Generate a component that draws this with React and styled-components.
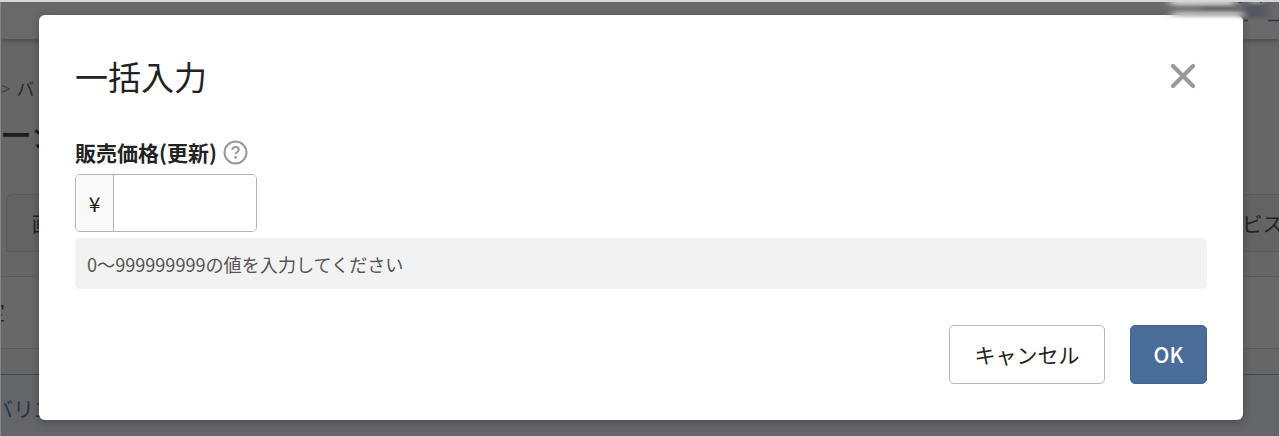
import styled, { createGlobalStyle } from 'styled-components';

const GlobalStyle = createGlobalStyle`
  * {
    box-sizing: border-box;
  }

  body {
    margin: 0;
    background: #d6d6d6;
    font-family: 'Noto Sans CJK JP', 'Noto Sans', sans-serif;
    color: #222;
    overflow: hidden;
  }
`;

const Screen = styled.div`
  position: relative;
  width: 1280px;
  height: 437px;
  padding: 2px 1px 1px 0;
  overflow: hidden;
`;

const Page = styled.div`
  height: 434px;
  overflow: hidden;
  background: #666;
  border-left: 1px solid #858585;
  white-space: nowrap;
`;

const PageHeader = styled.div`
  height: 37px;
  background: #696969;
  box-shadow: 0 1px 6px rgba(0, 0, 0, 0.35);
`;

const Breadcrumb = styled.div`
  display: flex;
  gap: 6px;
  height: 30px;
  margin-top: 34px;
  line-height: 30px;
  font-size: 18px;
  color: #2b2b2b;

  & span {
    color: #444;
    font-size: 17px;
  }
`;

const PageTitle = styled.div`
  height: 44px;
  margin-top: 8px;
  line-height: 44px;
  font-size: 32px;
  font-weight: 500;
  text-indent: -1px;
  color: #1d1d1d;
`;

const Tabs = styled.div`
  display: flex;
  justify-content: space-between;
  height: 58px;
  margin-top: 39px;
  margin-left: 5px;
  border: 1px solid #595959;
  border-right: 0;
  border-radius: 6px 0 0 0;
  background: #636363;
  line-height: 57px;
  font-size: 20.5px;
`;

const Tab = styled.div`
  width: ${({ $width }) => $width}px;
  padding-left: ${({ $left }) => $left}px;
`;

const Panel = styled.div`
  height: 73px;
  margin-top: 24px;
  border: solid #595959;
  border-width: 1px 0;
  background: #686868;
  line-height: 70px;
  font-size: 20px;
  text-indent: -16px;
`;

const VariationBar = styled.div`
  height: 64px;
  margin-top: 25px;
  border-top: 1px solid #354c63;
  background: #636568;
  line-height: 67px;
  font-size: 21px;
  text-indent: -9px;
  color: #26364c;
`;

const Modal = styled.div`
  position: absolute;
  top: 15px;
  left: 39px;
  width: 1204px;
  height: 405px;
  padding: 36px 36px 0;
  border-radius: 6px;
  background: #fff;
  box-shadow: 0 2px 8px rgba(0, 0, 0, 0.28);
`;

const ModalHeader = styled.div`
  display: flex;
  justify-content: space-between;
  align-items: center;
  height: 50px;
  padding-right: 11px;
`;

const ModalTitle = styled.h1`
  margin: 0;
  line-height: 51px;
  font-size: 33px;
  font-weight: 400;
`;

const Label = styled.div`
  display: flex;
  align-items: center;
  gap: 6px;
  height: 30px;
  margin-top: 36px;
  line-height: 30px;
  font-size: 21px;
  font-weight: 700;
`;

const PriceField = styled.div`
  display: flex;
  width: 182px;
  height: 58px;
  margin-top: 7px;
  border: 1px solid #b3b3b3;
  border-radius: 5px;
  overflow: hidden;
`;

const Currency = styled.span`
  flex: none;
  width: 38px;
  border-right: 1px solid #b3b3b3;
  background: #f9f9f9;
  line-height: 57px;
  font-size: 21px;
  text-align: center;
`;

const PriceInput = styled.input`
  min-width: 0;
  flex: 1;
  border: 0;
  outline: 0;
  background: #fff;
  font: inherit;
`;

const Hint = styled.p`
  height: 51px;
  margin: 6px 0 0;
  padding-left: 12px;
  border-radius: 5px;
  background: #f2f2f2;
  line-height: 52px;
  font-size: 18.1px;
  color: #555;
`;

const Actions = styled.div`
  display: flex;
  justify-content: flex-end;
  gap: 25px;
  margin-top: 36px;
`;

const Button = styled.button`
  width: ${({ $primary }) => ($primary ? 77 : 156)}px;
  height: 59px;
  padding: 0 0 1px;
  border: 1px solid ${({ $primary }) => ($primary ? '#426594' : '#b8b8b8')};
  border-radius: 5px;
  background: ${({ $primary }) => ($primary ? '#4a6c99' : '#fff')};
  color: ${({ $primary }) => ($primary ? '#fff' : '#222')};
  font-family: inherit;
  font-size: 21px;
  font-weight: ${({ $primary }) => ($primary ? 500 : 400)};
`;

const Smudge = styled.svg`
  position: absolute;
  top: 2px;
  left: 1150px;
`;

const CloseIcon = () => (
  <svg width="26" height="26" viewBox="0 0 26 26" fill="none" stroke="#999" strokeWidth="4.2" strokeLinecap="round">
    <path d="M3 3 23 23M23 3 3 23" />
  </svg>
);

const HelpIcon = () => (
  <svg width="25" height="25" viewBox="0 0 25 25" fill="none" stroke="#999" strokeWidth="2">
    <circle cx="12.5" cy="12.5" r="11" />
    <path d="M9.2 9.8c.2-2 1.5-2.9 3.3-2.9 2 0 3.3 1.1 3.3 2.7 0 2.4-3.2 2.3-3.2 4.7" />
    <circle cx="12.6" cy="17.4" r="1.4" fill="#999" stroke="none" />
  </svg>
);

const App = () => {
  return (
    <>
      <GlobalStyle />
      <Screen>
        <Page>
          <PageHeader />
          <Breadcrumb>
            <span>&gt;</span>バ
          </Breadcrumb>
          <PageTitle>ーシ</PageTitle>
          <Tabs>
            <Tab $width={60} $left={25}>
              画
            </Tab>
            <Tab $width={37} $left={0}>
              ビス
            </Tab>
          </Tabs>
          <Panel>定</Panel>
          <VariationBar>バリエ</VariationBar>
        </Page>

        <Modal>
          <ModalHeader>
            <ModalTitle>一括入力</ModalTitle>
            <CloseIcon />
          </ModalHeader>
          <Label>
            販売価格(更新)
            <HelpIcon />
          </Label>
          <PriceField>
            <Currency>¥</Currency>
            <PriceInput />
          </PriceField>
          <Hint>0〜999999999の値を入力してください</Hint>
          <Actions>
            <Button>キャンセル</Button>
            <Button $primary>OK</Button>
          </Actions>
        </Modal>

        <Smudge width="129" height="22" viewBox="0 0 129 22">
          <defs>
            <filter id="soft" x="-20%" y="-100%" width="140%" height="300%">
              <feGaussianBlur stdDeviation="4 1.5" />
            </filter>
          </defs>
          <g filter="url(#soft)">
            <rect x="20" y="-3" width="64" height="6" fill="#c8c8c8" />
            <rect x="22" y="3" width="70" height="7" fill="#7b7c7d" />
            <rect x="22" y="10" width="70" height="5" fill="#bcbcbc" />
            <rect x="50" y="4" width="40" height="5" fill="#68696c" />
            <rect x="92" y="0" width="26" height="16" fill="#55595e" />
            <path d="M101 -2h10v4h-10z" fill="#999" />
          </g>
          <path d="M94 18.5h4M118 18.5h11" stroke="#26364e" strokeWidth="1.5" />
          <path d="M89 .5h3M110 .5h2" stroke="#3c4656" />
        </Smudge>
      </Screen>
    </>
  );
};

export default App;
